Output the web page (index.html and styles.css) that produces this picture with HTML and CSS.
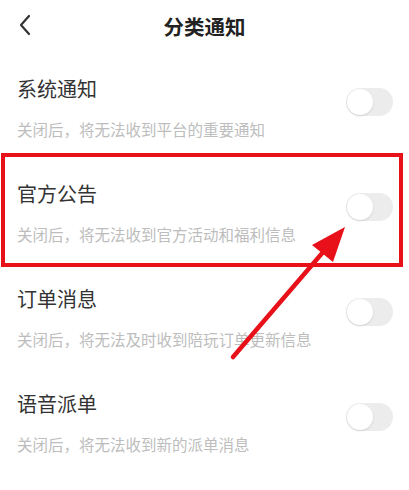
FILE: index.html
```html
<!DOCTYPE html>
<html lang="zh-CN">
<head>
    <meta charset="UTF-8">
    <title>分类通知</title>
    <link rel="stylesheet" href="styles.css">
</head>
<body>
    <div class="page">
        <div class="header">
            <span class="back">
                <svg width="14" height="22" viewBox="0 0 14 22">
                    <path d="M11 2 L3 11 L11 20" fill="none" stroke="#333" stroke-width="2.2" stroke-linecap="round" stroke-linejoin="round"/>
                </svg>
            </span>
            <div class="title">分类通知</div>
        </div>

        <div class="row">
            <div class="text">
                <div class="name">系统通知</div>
                <div class="desc">关闭后，将无法收到平台的重要通知</div>
            </div>
            <div class="switch"><span class="knob"></span></div>
        </div>
        <div class="row">
            <div class="text">
                <div class="name">官方公告</div>
                <div class="desc">关闭后，将无法收到官方活动和福利信息</div>
            </div>
            <div class="switch"><span class="knob"></span></div>
        </div>
        <div class="row">
            <div class="text">
                <div class="name">订单消息</div>
                <div class="desc">关闭后，将无法及时收到陪玩订单更新信息</div>
            </div>
            <div class="switch"><span class="knob"></span></div>
        </div>
        <div class="row">
            <div class="text">
                <div class="name">语音派单</div>
                <div class="desc">关闭后，将无法收到新的派单消息</div>
            </div>
            <div class="switch"><span class="knob"></span></div>
        </div>

        <!-- annotation on top of the screenshot -->
        <div class="highlight"></div>
        <svg class="arrow" width="409" height="490" viewBox="0 0 409 490">
            <line x1="233" y1="357" x2="324" y2="251" stroke="#e8111a" stroke-width="4.5" stroke-linecap="round"/>
            <polygon points="345,227 312,245 333,262" fill="#e8111a"/>
        </svg>
    </div>
</body>
</html>
```

FILE: styles.css
```css
body {
    margin: 0;
    background: #fff;
    font-family: "Noto Sans CJK SC", "Noto Sans", sans-serif;
}
.page {
    position: relative;
    width: 409px;
    height: 490px;
    overflow: hidden;
}
.header {
    height: 55px;
    display: flex;
    align-items: center;
    justify-content: center;
    position: relative;
}
.back {
    position: absolute;
    left: 18px;
    top: 14px;
}
.title {
    font-size: 20.5px;
    font-weight: bold;
    color: #222;
    margin-top: -3px;
}
.row {
    height: 105px;
    box-sizing: border-box;
    padding: 21px 16px 21px 17px;
    display: flex;
    justify-content: space-between;
    align-items: flex-start;
}
.name {
    font-size: 20px;
    line-height: 26px;
    color: #333;
}
.desc {
    margin-top: 17px;
    font-size: 15.5px;
    line-height: 20px;
    color: #bdbdbd;
}
.switch {
    margin-top: 12px;
    width: 47px;
    height: 28px;
    border-radius: 14px;
    background: #ececec;
    position: relative;
}
.knob {
    position: absolute;
    left: 1px;
    top: 1px;
    width: 26px;
    height: 26px;
    border-radius: 50%;
    background: #fff;
    box-shadow: 0 1px 2px rgba(0,0,0,0.12);
}
.highlight {
    position: absolute;
    left: 1px;
    top: 153px;
    width: 402px;
    height: 114px;
    box-sizing: border-box;
    border: 4px solid #e8111a;
}
.arrow {
    position: absolute;
    left: 0;
    top: 0;
    pointer-events: none;
}
```
